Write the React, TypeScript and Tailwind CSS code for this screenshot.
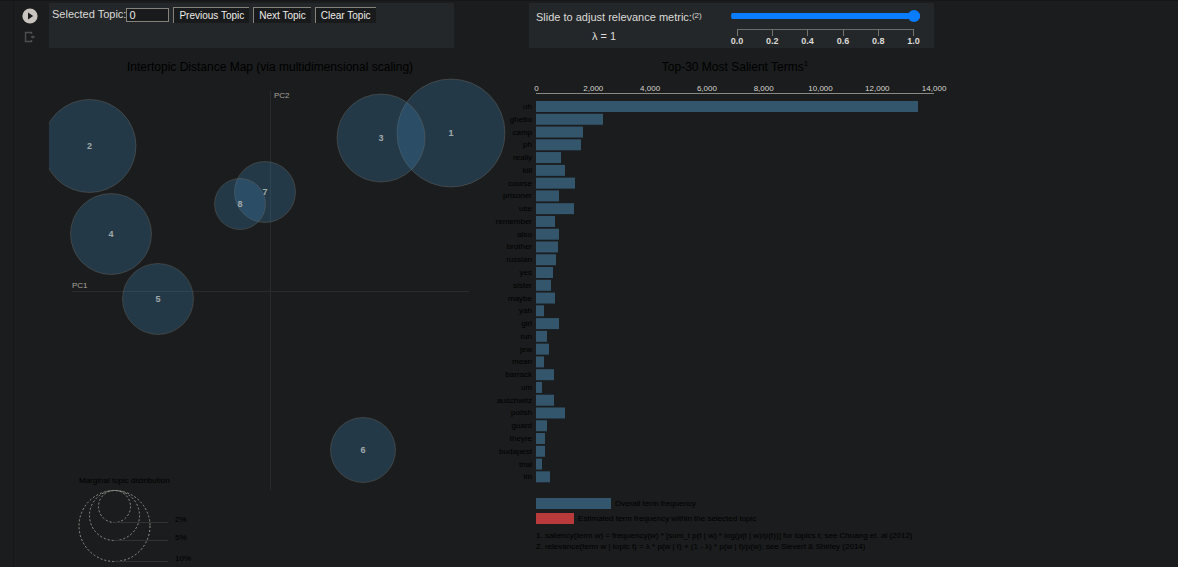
import { useState } from "react";

const terms: [string, number][] = [
  ["uh", 382], ["ghetto", 67], ["camp", 47], ["ph", 45], ["really", 25],
  ["kill", 29], ["course", 39], ["prisoner", 23], ["use", 38], ["remember", 19],
  ["also", 23], ["brother", 22], ["russian", 20], ["yes", 17], ["sister", 15],
  ["maybe", 19], ["yah", 8], ["girl", 23], ["run", 11], ["jew", 13],
  ["mean", 8], ["barrack", 18], ["um", 6], ["auschwitz", 18], ["polish", 29],
  ["guard", 11], ["theyre", 9], ["budapest", 9], ["trial", 6], ["im", 14],
];

const topics = [
  { id: 1, x: 402, y: 85, r: 54 },
  { id: 2, x: 40.5, y: 98, r: 46.5 },
  { id: 3, x: 332, y: 90, r: 44 },
  { id: 4, x: 62, y: 186, r: 40.5 },
  { id: 5, x: 109, y: 251, r: 35.5 },
  { id: 6, x: 314, y: 402, r: 32.5 },
  { id: 7, x: 216, y: 144, r: 30.5 },
  { id: 8, x: 191, y: 156, r: 25.5 },
];

const axisLabels = ["0", "2,000", "4,000", "6,000", "8,000", "10,000", "12,000", "14,000"];
const sliderTicks = ["0.0", "0.2", "0.4", "0.6", "0.8", "1.0"];

const marginal = [
  { label: "2%", r: 16 },
  { label: "5%", r: 25 },
  { label: "10%", r: 35.5 },
];

const buttonClass =
  "h-4 border-t border-l border-[#85827c] bg-[#181a1b] px-[5px] text-[10px] leading-[14px] text-[#f0eeea]";

function Gutter() {
  return (
    <div className="flex w-[49px] shrink-0">
      <div className="w-[14px] shrink-0 border-r border-[#141617]" />
      <div className="flex flex-col items-center gap-[6px] pt-[7px] pl-2">
        <button aria-label="Run cell" className="block">
          <svg width="16" height="16" viewBox="0 0 16 16">
            <circle cx="8" cy="8" r="7.6" fill="#c9c5be" />
            <path d="M6 4.6v6.8L11.2 8z" fill="#181a1b" />
          </svg>
        </button>
        <button aria-label="Output actions" className="block">
          <svg width="14" height="14" viewBox="0 0 14 14" fill="none" stroke="#4d5052" strokeWidth="1.4">
            <path d="M8.500 4V2.500H2.500v9h6V10M8 7h2" />
            <path d="M9.500 5.200 12.300 7 9.500 8.800z" fill="#4d5052" stroke="none" />
          </svg>
        </button>
      </div>
    </div>
  );
}

function TopicControls() {
  const [topic, setTopic] = useState(0);
  return (
    <div className="flex h-[45px] w-[405px] items-start bg-[#23272a] pt-1 pl-[3px]">
      <label htmlFor="topic" className="text-[11px] leading-[15px] text-[#dedbd6]">Selected Topic:</label>
      <input
        id="topic"
        value={topic}
        onChange={(e) => setTopic(Number(e.target.value) || 0)}
        className="mt-px h-[14px] w-[43px] border border-[#85827c] bg-[#181a1b] px-[2px] text-[11px] leading-3 text-[#e8e6e3]"
      />
      <div className="ml-1 flex gap-1">
        <button className={buttonClass} onClick={() => setTopic(Math.max(0, topic - 1))}>Previous Topic</button>
        <button className={buttonClass} onClick={() => setTopic(Math.min(8, topic + 1))}>Next Topic</button>
        <button className={buttonClass} onClick={() => setTopic(0)}>Clear Topic</button>
      </div>
    </div>
  );
}

function RelevanceControls() {
  const [lambda, setLambda] = useState(1);
  return (
    <div className="flex h-[45px] w-[405px] bg-[#23272a] pl-[7px] text-[11px] text-[#dedbd6]">
      <div className="w-[195px] pt-[6px]">
        <label htmlFor="lambda" className="block leading-4 whitespace-nowrap">
          Slide to adjust relevance metric:<sup className="top-[-3px] text-[8px] leading-none">(2)</sup>
        </label>
        <div className="mt-[3px] pl-14 leading-4">λ = {lambda}</div>
      </div>
      <div className="w-[192px] pt-[7px]">
        <input
          id="lambda"
          type="range"
          min="0"
          max="1"
          step="0.01"
          value={lambda}
          onChange={(e) => setLambda(Number(e.target.value))}
          className="block h-3 w-[189px] appearance-none rounded-full bg-[linear-gradient(#0a7cff,#0a7cff)] bg-[length:100%_6px] bg-center bg-no-repeat [&::-webkit-slider-thumb]:h-3 [&::-webkit-slider-thumb]:w-3 [&::-webkit-slider-thumb]:appearance-none [&::-webkit-slider-thumb]:rounded-full [&::-webkit-slider-thumb]:bg-[#0a7cff]"
        />
        <svg width="192" height="24" className="block overflow-visible" fontFamily="Liberation Sans, sans-serif">
          <path d="M6.500 13V7.500H182.500V13" fill="none" stroke="#6b6d6a" />
          {sliderTicks.map((t, i) => (
            <g key={t}>
              <path d={`M${6.5 + Math.round(i * 35.2)} 7V14`} stroke="#77776f" />
              <text x={6 + i * 35.3} y="22" textAnchor="middle" fontSize="9" fontWeight="bold" fill="#dedbd6">{t}</text>
            </g>
          ))}
        </svg>
      </div>
    </div>
  );
}

function DistanceMap() {
  return (
    <svg width="480" height="518" className="block" fontFamily="Liberation Sans, sans-serif">
      <text x="221" y="23" textAnchor="middle" fontSize="12" fill="#000">Intertopic Distance Map (via multidimensional scaling)</text>
      <g stroke="#292c2e">
        <path d="M23 243.500H420" />
        <path d="M221.500 43V442" />
      </g>
      <g fontSize="8" fill="#aaa69f">
        <text x="23" y="240">PC1</text>
        <text x="225" y="50">PC2</text>
      </g>
      {topics.map((t) => (
        <circle key={t.id} cx={t.x} cy={t.y} r={t.r} fill="#3b7dab" fillOpacity="0.3" stroke="#70695f" strokeOpacity="0.4" />
      ))}
      {topics.map((t) => (
        <text key={t.id} x={t.x} y={t.y + 3} textAnchor="middle" fontSize="9" fontWeight="bold" fill="#a1aaaa">{t.id}</text>
      ))}
      <text x="30" y="435" fontSize="8" fill="#000">Marginal topic distribution</text>
      {marginal.map((m) => (
        <g key={m.label}>
          <circle cx="65.5" cy={442.5 + m.r} r={m.r} fill="none" stroke="#96938d" strokeDasharray="2 2" />
          <path d={`M65 ${442.5 + 2 * m.r}H119`} stroke="#303335" />
          <text x="126" y={442 + 2 * m.r} fontSize="8" fill="#000">{m.label}</text>
        </g>
      ))}
    </svg>
  );
}

function TermChart() {
  return (
    <svg width="420" height="518" className="block overflow-visible" fontFamily="Liberation Sans, sans-serif">
      <text x="206" y="23" textAnchor="middle" fontSize="12" fill="#000">
        Top-30 Most Salient Terms<tspan dy="-5" fontSize="8">1</tspan>
      </text>
      <g fontSize="8" fill="#d8d5cf" textAnchor="middle">
        {axisLabels.map((l, i) => (
          <text key={l} x={7.5 + i * 56.8} y="43">{l}</text>
        ))}
      </g>
      <path d="M7 45.500H405" stroke="#8a8882" />
      {terms.map(([term, width], i) => (
        <g key={term}>
          <text x="3" y={61 + i * 12.77} textAnchor="end" fontSize="8" fill="#000">{term}</text>
          <rect x="7" y={53 + i * 12.77} width={width} height="11" fill="#33566d" />
        </g>
      ))}
      <rect x="7" y="450" width="75" height="11" fill="#33566d" />
      <rect x="7" y="465" width="38" height="11" fill="#b93a3a" />
      <g fontSize="8" fill="#000">
        <text x="86" y="458">Overall term frequency</text>
        <text x="49" y="473">Estimated term frequency within the selected topic</text>
        <text x="7" y="490">1. saliency(term w) = frequency(w) * [sum_t p(t | w) * log(p(t | w)/p(t))] for topics t; see Chuang et. al (2012)</text>
        <text x="7" y="501">2. relevance(term w | topic t) = λ * p(w | t) + (1 - λ) * p(w | t)/p(w); see Sievert &amp; Shirley (2014)</text>
      </g>
    </svg>
  );
}

export default function App() {
  return (
    <main className="flex min-h-screen overflow-hidden border-t border-[#141617] bg-[#1a1c1d] font-['Liberation_Sans',Arial,sans-serif]">
      <Gutter />
      <section className="w-[480px] shrink-0 pt-[2px]">
        <TopicControls />
        <DistanceMap />
      </section>
      <section className="min-w-0 flex-1 pt-[2px]">
        <RelevanceControls />
        <TermChart />
      </section>
    </main>
  );
}
